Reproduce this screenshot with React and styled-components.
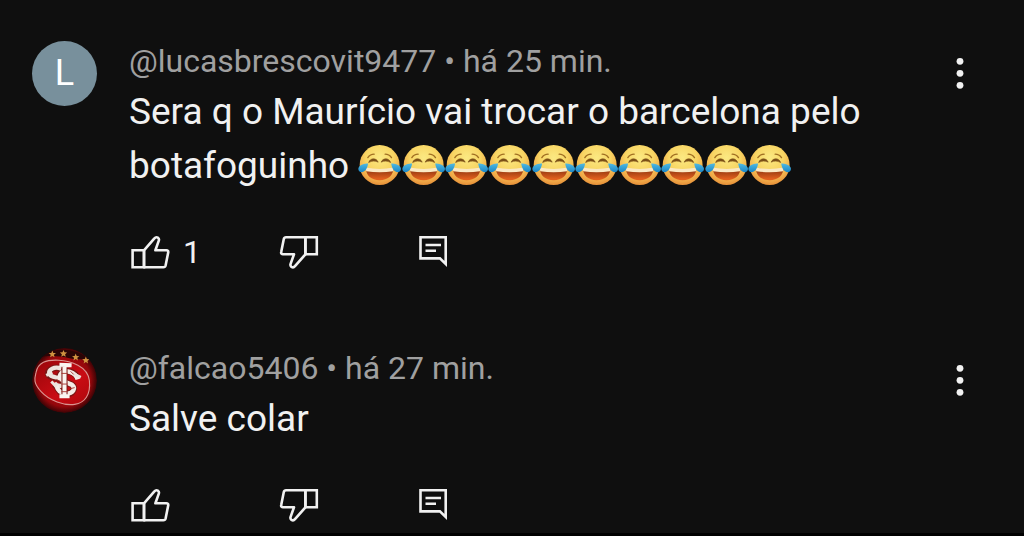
import React from 'react';
import styled, { createGlobalStyle } from 'styled-components';

const GlobalStyle = createGlobalStyle`
  body {
    margin: 0;
    background: #000;
    color: #f1f1f1;
    font-family: Roboto, "Liberation Sans", sans-serif;
  }
`;

const Feed = styled.main`
  padding-top: 39px;
  background: #0f0f0f;
`;

const Comment = styled.article`
  display: grid;
  grid-template-columns: 65px minmax(0, 1fr) 48px;
  column-gap: 32px;
  align-items: start;
  padding: 0 40px 72px 32px;

  &:last-child {
    padding-bottom: 6px;
  }
`;

const Avatar = styled.div`
  width: 65px;
  height: 65px;
  margin-top: 2px;
  border-radius: 50%;
  display: flex;
  align-items: center;
  justify-content: center;
  overflow: hidden;
  background: ${(p) => p.$color || 'transparent'};
  font-size: 36px;
  line-height: 65px;
  color: #fff;
`;

const Meta = styled.header`
  margin-bottom: 2px;
  font-size: 32px;
  line-height: 44px;
  color: #a0a0a0;
  white-space: nowrap;
`;

const Message = styled.p`
  margin: 0;
  font-size: 37px;
  line-height: 54px;
`;

const Laughs = styled.span`
  display: inline-grid;
  grid-template-columns: repeat(10, 1fr);
  width: 433px;
  vertical-align: -9px;

  svg {
    display: block;
    width: 100%;
    height: 44px;
  }
`;

const Actions = styled.div`
  display: grid;
  grid-template-columns: 149px 134px 44px;
  margin-top: 37px;
`;

const IconButton = styled.button`
  display: flex;
  align-items: center;
  gap: 10px;
  height: 44px;
  padding: 0;
  border: 0;
  background: none;
  color: inherit;
  font: inherit;
  font-size: 32px;
  cursor: pointer;

  svg {
    flex: none;
    display: block;
  }
`;

const MenuButton = styled(IconButton)`
  justify-content: center;
  margin-top: 12px;
`;

function ThumbIcon({ down }) {
  return (
    <svg width="44" height="44" viewBox="1 0 44 44" fill="none" stroke="currentColor" strokeWidth="2.6" aria-hidden="true">
      <g transform={down ? 'rotate(180 22.2 22.3)' : undefined}>
        <path d="M16 20.3H4.6v17H16z" />
        <path d="M16 20.3L26.4 8.4c1-1.200 2.400-1.400 3.500-.7 1 .7 1.300 1.800.9 3L27.400 20.300h11c1.300 0 2.100.9 1.800 2.200l-2.600 13c-.3 1.200-1 1.800-2.200 1.800H16z" strokeLinejoin="round" />
      </g>
    </svg>
  );
}

function ReplyIcon() {
  return (
    <svg width="44" height="44" viewBox="1 0 44 44" fill="none" stroke="currentColor" strokeWidth="2.6" aria-hidden="true">
      <path d="M9.500 7.200h25.200v26.700l-5.800-5.500H9.500z" />
      <path d="M14.500 15h15.500M14.500 20.700h10.500" />
    </svg>
  );
}

function DotsIcon() {
  return (
    <svg width="44" height="44" viewBox="0 0 44 44" fill="currentColor" aria-hidden="true">
      <circle cx="22" cy="10.300" r="3.400" />
      <circle cx="22" cy="22.300" r="3.400" />
      <circle cx="22" cy="34.300" r="3.400" />
    </svg>
  );
}

function LaughDefs() {
  return (
    <svg width="0" height="0" style={{ position: 'absolute' }} aria-hidden="true">
      <defs>
        <radialGradient id="face" cx="50%" cy="32%" r="70%">
          <stop offset="0" stopColor="#fbe983" />
          <stop offset="0.5" stopColor="#f8d563" />
          <stop offset="0.85" stopColor="#efa545" />
          <stop offset="1" stopColor="#e28a35" />
        </radialGradient>
        <linearGradient id="mouth" x1="0" y1="0" x2="0" y2="1">
          <stop offset="0.200" stopColor="#963a12" />
          <stop offset="0.900" stopColor="#e2601e" />
        </linearGradient>
        <linearGradient id="tear" x1="0" y1="0" x2="0" y2="1">
          <stop offset="0" stopColor="#4fb9e2" />
          <stop offset="1" stopColor="#1b86c6" />
        </linearGradient>
      </defs>
    </svg>
  );
}

function Laugh() {
  return (
    <svg viewBox="0 0 44 44" aria-hidden="true">
      <circle cx="22" cy="22" r="20.300" fill="url(#face)" />
      <path d="M10 14.500c1.500-2.200 3.800-3.500 6.400-3.500M34 14.500c-1.500-2.200-3.800-3.500-6.400-3.500" fill="none" stroke="#a06f22" strokeWidth="1.400" strokeLinecap="round" />
      <path d="M10.800 19.500c1.600-5 8-5 9.700-.4-3-1.500-6.500-1.400-9.700.4zM33.200 19.500c-1.600-5-8-5-9.700-.4 3-1.500 6.500-1.400 9.700.4z" fill="#7a4f17" stroke="#7a4f17" strokeWidth="0.600" strokeLinejoin="round" />
      <path d="M8 25c9 2.200 19 2.200 28 0 0 7.600-5.600 12.400-14 12.400S8 32.600 8 25z" fill="url(#mouth)" />
      <path d="M8 24.600c9 1.800 19 1.800 28 0 .2 1.500 0 2.600-.4 3.700-9 1.400-18.200 1.400-27.200 0-.4-1.100-.6-2.200-.4-3.700z" fill="#fbe9c4" />
      <path d="M10.200 20.600C6.500 20.600 2 21.900.7 24.500c-1.100 2.400.6 5 3.300 4.800 3.900-.3 5.900-5 6.200-8.700z" fill="url(#tear)" />
      <path d="M33.800 20.600c3.700 0 8.200 1.300 9.500 3.900 1.100 2.400-.6 5-3.300 4.800-3.900-.3-5.900-5-6.200-8.700z" fill="url(#tear)" />
    </svg>
  );
}

function Crest() {
  const star = 'M0-3.600L1-1.200 3.600-1 1.600.7 2.200 3.200 0 1.900-2.200 3.200-1.600.7-3.600-1-1-1.200z';
  return (
    <svg width="65" height="65" viewBox="0 0 64 64" aria-hidden="true">
      <defs>
        <radialGradient id="ball" cx="50%" cy="50%" r="50%">
          <stop offset="0" stopColor="#c80a10" />
          <stop offset="0.800" stopColor="#94070b" />
          <stop offset="1" stopColor="#3a0305" />
        </radialGradient>
        <linearGradient id="disc" x1="0" y1="0" x2="1" y2="1">
          <stop offset="0" stopColor="#98060a" />
          <stop offset="0.600" stopColor="#c90c14" />
          <stop offset="1" stopColor="#b0080d" />
        </linearGradient>
      </defs>
      <circle cx="32" cy="32" r="32" fill="url(#ball)" />
      <path d="M8 9C20-1 44-1 57 12c-6-2-12 0-20-2S16 7 8 9z" fill="#2a0506" />
      <path d="M4 24C6 14 14 11.500 26 12S55 18 56.500 32 52 54 42 55.500 17 52 9 43 2.500 30 4 24z" fill="url(#disc)" stroke="#d99490" strokeWidth="1.100" />
      <g fill="#cf9240">
        <path d={star} transform="translate(20 6)" />
        <path d={star} transform="translate(31 5.500)" />
        <path d={star} transform="translate(43 9)" />
        <path d={star} transform="translate(53 12)" />
      </g>
      <g fill="none" strokeLinejoin="round">
        <path d="M28 20c-7-2-13 2-12 6 2 5 14 2 16 8 1 5-6 6-10 2M45 30c-2-7-14-10-18-3-2 6 8 7 12 9 5 3 1 10-6 9-5 0-8-4-9-9" stroke="#7c1715" strokeWidth="6.400" />
        <path d="M29 20.500c-7-3-13 1-12 5 2 5 13 2 14 8 1 5-6 5-9 1" stroke="#ede3dd" strokeWidth="4.200" />
        <path d="M45 31c-2-7-13-11-17-5-3 5 6 8 11 10 5 4 1 9-5 9-6 0-9-4-10-8" stroke="#f4ece7" strokeWidth="4.400" />
        <path d="M40 25l8 4M14 27l6-3M19 33l5 5" stroke="#ede3dd" strokeWidth="3" />
        <path d="M32 16v32" stroke="#7c1715" strokeWidth="6" />
        <path d="M32 16v32M27 16.500l12 .5M27 47.500h10" stroke="#faf4f0" strokeWidth="4" />
        <path d="M29 25h6M29 35.500h6M29 43h6M24 31l4 2M38 23l3 3M38 40l4-1" stroke="#a3342e" strokeWidth="0.900" />
      </g>
    </svg>
  );
}

function CommentItem({ avatar, color, author, time, likes, children }) {
  return (
    <Comment>
      <Avatar $color={color}>{avatar}</Avatar>
      <div>
        <Meta>{author} • {time}</Meta>
        <Message>{children}</Message>
        <Actions>
          <IconButton type="button" aria-label="Gostei"><ThumbIcon />{likes}</IconButton>
          <IconButton type="button" aria-label="Não gostei"><ThumbIcon down /></IconButton>
          <IconButton type="button" aria-label="Responder"><ReplyIcon /></IconButton>
        </Actions>
      </div>
      <MenuButton type="button" aria-label="Mais opções"><DotsIcon /></MenuButton>
    </Comment>
  );
}

export default function App() {
  return (
    <>
      <GlobalStyle />
      <LaughDefs />
      <Feed>
        <CommentItem avatar="L" color="#78909c" author="@lucasbrescovit9477" time="há 25 min." likes="1">
          Sera q o Maurício vai trocar o barcelona pelo botafoguinho{' '}
          <Laughs role="img" aria-label="Chorando de rir">
            {Array.from({ length: 10 }, (_, i) => <Laugh key={i} />)}
          </Laughs>
        </CommentItem>
        <CommentItem avatar={<Crest />} author="@falcao5406" time="há 27 min.">
          Salve colar
        </CommentItem>
      </Feed>
    </>
  );
}
